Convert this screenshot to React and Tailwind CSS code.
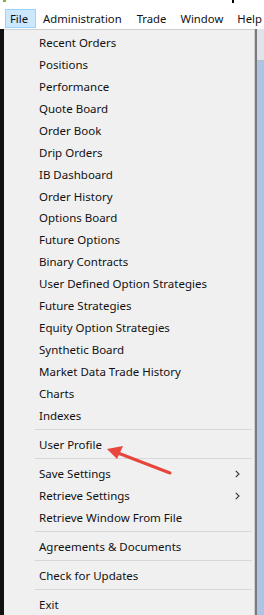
import React from "react";

const group1 = [
  "Recent Orders",
  "Positions",
  "Performance",
  "Quote Board",
  "Order Book",
  "Drip Orders",
  "IB Dashboard",
  "Order History",
  "Options Board",
  "Future Options",
  "Binary Contracts",
  "User Defined Option Strategies",
  "Future Strategies",
  "Equity Option Strategies",
  "Synthetic Board",
  "Market Data Trade History",
  "Charts",
  "Indexes",
];

function Item({ label, sub }) {
  return (
    <div className="h-[22px] flex items-center pt-[1px] pl-[35px] pr-[14px] text-[11.5px] text-[#111] leading-none">
      <span className="flex-1 whitespace-nowrap">{label}</span>
      {sub && (
        <svg width="5" height="8" viewBox="0 0 5 8">
          <path d="M0.8 0.8 L4 4 L0.8 7.2" fill="none" stroke="#333" strokeWidth="1.1" />
        </svg>
      )}
    </div>
  );
}

function Sep() {
  return (
    <div className="h-[7px] flex items-center pl-[31px] pr-[2px]">
      <div className="h-px w-full bg-[#d7d7d7]" />
    </div>
  );
}

export default function App() {
  return (
    <div
      className="relative w-[264px] h-[615px] overflow-hidden bg-white flex flex-col"
      style={{ fontFamily: '"Noto Sans", "Open Sans", sans-serif' }}
    >
      <span className="absolute left-[3px] top-0 w-[3px] h-[2px] bg-[#7cb342]" />
      <span className="absolute left-[232px] top-0 w-[2px] h-[3px] bg-black" />

      {/* menu bar */}
      <div className="h-[29px] flex items-start pt-[9px] text-[11.3px] text-[#111] shrink-0 whitespace-nowrap">
        <div className="shrink-0 ml-[5px] h-[19px] w-[31px] bg-[#cce8ff] border border-[#99d1ff] flex items-center pl-[4px] pt-[1px]">
          File
        </div>
        <span className="shrink-0 ml-[7px] h-[19px] flex items-center pt-[1px]">Administration</span>
        <span className="shrink-0 ml-[15px] h-[19px] flex items-center pt-[1px]">Trade</span>
        <span className="shrink-0 ml-[14px] h-[19px] flex items-center pt-[1px]">Window</span>
        <span className="shrink-0 ml-[14px] h-[19px] flex items-center pt-[1px]">Help</span>
      </div>

      <div className="flex flex-1 min-h-0">
        <div className="w-[4px] bg-[#111]" />
        <div className="w-[251px] bg-[#f0f0f0] border-t border-r border-[#cfcfcf] pt-[1px] flex flex-col">
          {group1.map((l) => (
            <Item key={l} label={l} />
          ))}
          <Sep />
          <Item label="User Profile" />
          <Sep />
          <Item label="Save Settings" sub />
          <Item label="Retrieve Settings" sub />
          <Item label="Retrieve Window From File" />
          <Sep />
          <Item label="Agreements & Documents" />
          <Sep />
          <Item label="Check for Updates" />
          <Sep />
          <Item label="Exit" />
        </div>
        <div className="w-[2px] bg-[#7a7a7a]" />
        <div className="flex-1 bg-[#aec4e6] flex flex-col">
          <div className="h-[32px] bg-[#dfe3ea] border-b border-[#b8bec8]" />
        </div>
      </div>

      {/* red annotation arrow */}
      <svg
        className="absolute left-0 top-0 pointer-events-none"
        width="264"
        height="615"
        viewBox="0 0 264 615"
      >
        <line x1="170" y1="473" x2="118" y2="453" stroke="#e8453c" strokeWidth="3" strokeLinecap="round" />
        <polygon points="107,449 123,446 117,459" fill="#e8453c" />
      </svg>
    </div>
  );
}
